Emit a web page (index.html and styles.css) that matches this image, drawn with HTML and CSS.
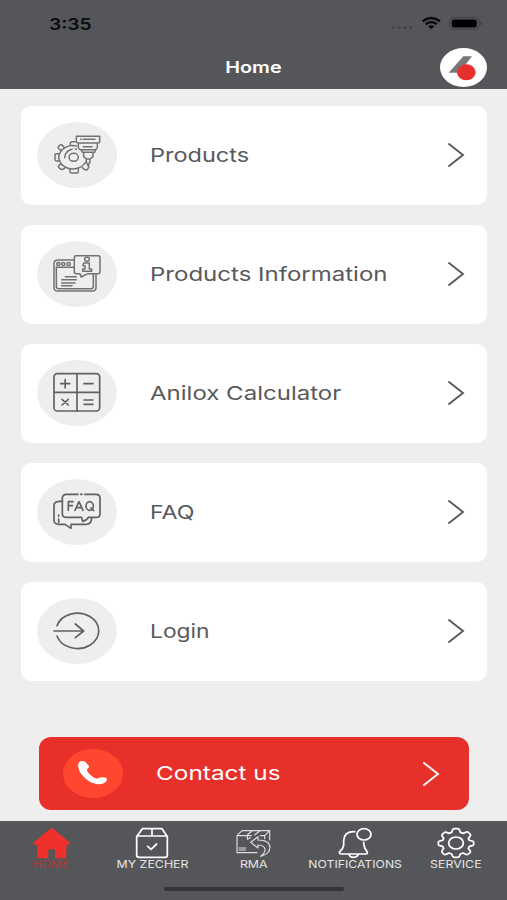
FILE: index.html
```html
<!DOCTYPE html>
<html lang="en">
<head>
<meta charset="utf-8">
<title>Home</title>
<link rel="stylesheet" href="styles.css">
</head>
<body>
<div class="app">
  <header class="header">
    <div class="status">
      <span class="time"><span class="wide">3:35</span></span>
      <svg class="status-icons" width="96" height="16" viewBox="0 0 96 16">
        <g fill="#424347"><circle cx="3" cy="12.500" r="1.500"/><circle cx="9" cy="12.500" r="1.500"/><circle cx="15" cy="12.500" r="1.500"/><circle cx="21" cy="12.500" r="1.500"/></g>
        <g fill="none" stroke="#08090b" stroke-width="2.300"><path d="M32.500 6.300Q41-.3 50 6.300M35.700 9.200Q41.300 5.100 46.800 9.200"/></g>
        <path d="M38 11.300Q41.300 9 44.600 11.300L41.300 14Z" fill="#08090b"/>
        <rect x="59.500" y="2.500" width="29.500" height="11.800" rx="3.800" fill="#55565a" stroke="#3d3e42"/>
        <rect x="61.700" y="4.400" width="25" height="8" rx="2" fill="#000"/>
        <path d="M90.500 6.300Q94 8.500 90.500 10.500Z" fill="#3d3e42"/>
      </svg>
    </div>
    <div class="titlebar">
      <h1 class="title"><span class="wide">Home</span></h1>
      <svg class="logo" width="47" height="39" viewBox="0 0 141 117">
        <ellipse cx="70.500" cy="58.500" rx="70.500" ry="58.500" fill="#fff"/>
        <path d="M26 74 70 25H96L58 74Z" fill="#77787b"/>
        <ellipse cx="79" cy="73" rx="28" ry="24" fill="#e5302e"/>
      </svg>
    </div>
  </header>

  <main class="content">
    <nav class="menu">
      <a class="card">
        <svg class="icon" viewBox="51 67 240 198">
          <g class="line">
            <path d="M169 139A42 35 0 1 0 197 187M151 137V130Q151 126 157 126H165M132 143 126 136Q121 133 116 140 112 145 120 150L125 153M119 162H108Q105 162 105 166V179Q105 184 109 184H120M124 192 116 198Q113 201 119 206 126 212 132 207L137 202M150 207V217Q150 220 155 220H171Q175 220 175 216V207M187 204 193 209Q199 213 204 207 208 201 205 196"/>
            <ellipse cx="161" cy="173" rx="14" ry="12"/>
            <path d="M134 174Q135 154 156 149M166 148 169 149M169 110H239V126Q239 130 234 130H175Q169 130 169 125ZM175 131V143Q175 148 181 150H226Q232 148 232 143V131M184 150 187 158H224L227 150M191 160V171L199 178V187L204 197 210 187V178L219 171V160M199 178H210M190 119H225M182 119H184M190 141H216"/>
          </g>
        </svg>
        <span class="label"><span class="wide products">Products</span></span>
        <svg class="chevron" viewBox="0 0 18 26"><path d="M2 2 16 13 2 24"/></svg>
      </a>
      <a class="card">
        <svg class="icon" viewBox="51 65 240 198">
          <g class="line">
            <path d="M162 122H114Q102 122 102 132V205Q102 215 114 215H217Q228 215 228 205V164M109 143V202Q109 208 117 208H213Q220 208 220 202V164M109 144H162"/>
            <ellipse cx="115" cy="134" rx="5" ry="4.500"/><ellipse cx="130" cy="134" rx="5" ry="4.500"/><ellipse cx="146" cy="134" rx="5" ry="4.500"/>
            <path d="M136 172H169M125 181H169M125 191H165M125 199H156M168 109H234Q240 109 240 114V157Q240 163 234 163H204L183 173 180 163H169Q163 163 163 157V115Q163 109 168 109Z"/>
            <ellipse cx="201" cy="120" rx="7" ry="6"/>
            <path d="M191 131H208V149H215V156H188V149H195V139H189Z"/>
          </g>
        </svg>
        <span class="label"><span class="wide information">Products Information</span></span>
        <svg class="chevron" viewBox="0 0 18 26"><path d="M2 2 16 13 2 24"/></svg>
      </a>
      <a class="card">
        <svg class="icon" viewBox="51 62 240 198">
          <g class="line bold">
            <rect x="102" y="103" width="137" height="112" rx="10"/>
            <path d="M171 103V215M102 159H239M122 133H149M135.500 121V145M192 133H219M192 182H219M192 195H219M126 180 145 197M145 180 126 197"/>
          </g>
        </svg>
        <span class="label"><span class="wide calculator">Anilox Calculator</span></span>
        <svg class="chevron" viewBox="0 0 18 26"><path d="M2 2 16 13 2 24"/></svg>
      </a>
      <a class="card">
        <svg class="icon" viewBox="51 58 240 198">
          <g class="line bold">
            <path d="M174 104H140Q127 104 127 116V162Q127 173 140 173H185L188 185Q199 183 205 173H228Q240 173 240 162V116Q240 104 228 104H194M182 104H186M127 125H117Q102 126 102 138V182Q102 194 117 194H135L153 206V194H198Q213 194 215 177M116 166V170M116 178V188"/>
            <path d="M145 152V126H159M145 138H157M165 152 177 126 189 152M170 144H185M213 145 221 153"/>
            <ellipse cx="209" cy="139" rx="11" ry="13"/>
          </g>
        </svg>
        <span class="label"><span class="wide faq">FAQ</span></span>
        <svg class="chevron" viewBox="0 0 18 26"><path d="M2 2 16 13 2 24"/></svg>
      </a>
      <a class="card">
        <svg class="icon" viewBox="51 55 240 198">
          <g class="line bold"><path d="M111 138A64 53 0 1 1 111 169M102 154H191M166 133 191 154 166 174"/></g>
        </svg>
        <span class="label"><span class="wide login">Login</span></span>
        <svg class="chevron" viewBox="0 0 18 26"><path d="M2 2 16 13 2 24"/></svg>
      </a>
    </nav>
    <a class="contact">
      <svg class="phone" viewBox="129 56 180 148"><path d="M181 93Q189 90 196 95L207 107Q208 113 201 117 199 121 206 129 218 142 228 145 234 146 238 143 247 139 258 143 264 148 258 155 246 166 226 161 205 156 190 139 174 123 174 104 175 96 181 93Z" fill="#fff"/></svg>
      <span class="label"><span class="wide contact-text">Contact us</span></span>
      <svg class="chevron" viewBox="0 0 18 26"><path d="M2 2 16 13 2 24"/></svg>
    </a>
  </main>

  <footer class="footer">
    <nav class="tabs">
      <a class="tab active">
        <svg class="tab-icon" viewBox="99 36 108 96"><path d="M150 41Q155 37 160 41L208 82Q213 87 207 89H199V124Q199 130 193 130H165V108Q165 102 159 102H151Q145 102 145 108V130H118Q112 130 112 124V89H103Q97 87 102 82Z" fill="#ef302c"/></svg>
        <span class="tab-label"><span class="wide">HOME</span></span>
      </a>
      <a class="tab">
        <svg class="tab-icon" viewBox="404 36 108 96"><g class="line white"><path d="M429 41H488L504 65V120Q504 127 497 127H420Q412 127 412 120V65ZM412 63H504M458 41V63M445 94 455 103 472 87"/></g></svg>
        <span class="tab-label"><span class="wide">MY ZECHER</span></span>
      </a>
      <a class="tab">
        <svg class="tab-icon" viewBox="706 36 108 96"><g class="line white thin"><path d="M755 62H712V113H772M712 62 727 47H810V75M795 62V71M810 47 795 62H782M743 60 757 48M765 60 780 48M743 62V73L752 68M718 99H738M718 105H738"/><path d="M753 82 775 65V75Q810 75 811 97 810 118 783 124 798 113 796 102 793 91 775 90V99Z"/></g></svg>
        <span class="tab-label"><span class="wide">RMA</span></span>
      </a>
      <a class="tab">
        <svg class="tab-icon" viewBox="249 36 108 96"><g class="line white"><path d="M302 50Q270 49 269 77V91Q268 100 258 109 253 116 262 117H334Q343 116 339 109 330 100 329 82M285 118Q287 127 298 127 310 127 313 118"/><ellipse cx="330" cy="58" rx="21" ry="17"/></g></svg>
        <span class="tab-label"><span class="wide notifications">NOTIFICATIONS</span></span>
      </a>
      <a class="tab">
        <svg class="tab-icon" viewBox="554 36 108 96"><g class="line white"><ellipse cx="608" cy="84" rx="22" ry="18"/><path d="M598 44Q599 41 603 41H613Q617 41 618 44L621 52 630 55 639 51Q643 50 646 53L651 58Q653 61 650 64L645 70 648 76 657 78Q661 79 661 82V88Q661 91 657 92L648 94 645 100 650 107Q653 110 650 113L644 118Q640 120 637 118L629 114 621 117 618 124Q617 127 613 127H603Q599 127 598 124L595 117 587 114 578 118Q574 120 571 117L566 112Q564 109 567 106L571 100 568 94 559 92Q555 91 555 88V82Q555 79 559 78L568 76 571 70 567 64Q564 61 567 58L573 53Q576 50 580 52L587 55 595 52Z"/></g></svg>
        <span class="tab-label"><span class="wide">SERVICE</span></span>
      </a>
    </nav>
    <div class="home-indicator"></div>
  </footer>
</div>
</body>
</html>
```

FILE: styles.css
```css
* { box-sizing: border-box; }
body { margin: 0; background: #eee; font-family: Inter, "Liberation Sans", sans-serif; }
.app { width: 507px; height: 900px; display: flex; flex-direction: column; overflow: hidden; }
svg { display: block; flex: none; }
.wide { display: inline-block; white-space: nowrap; transform: scaleX(1.2); transform-origin: left; }
.products { transform: scaleX(1.237); }
.information, .calculator { transform: scaleX(1.264); }
.faq { transform: scaleX(1.22); }
.contact-text { transform: scaleX(1.282); }

.header { height: 89px; background: #555659; flex: none; }
.status { height: 48px; display: flex; justify-content: space-between; align-items: flex-start; padding: 15px 21px 0 49px; }
.time { font-size: 16px; line-height: 18px; font-weight: 600; color: #0b0c0e; }
.titlebar { display: grid; grid-template-columns: 1fr auto 1fr; height: 39px; padding-right: 20px; padding-left: 20px; }
.title { grid-column: 2; margin: 0; font-size: 16.500px; line-height: 38px; font-weight: 600; color: #fff; }
.title .wide { transform-origin: center; }
.logo { justify-self: end; }

.content { height: 732px; flex: none; padding: 17px 20px 0 21px; }
.menu { display: flex; flex-direction: column; gap: 20px; }
.card { height: 99px; display: flex; align-items: center; padding: 0 22px 1px 16px; background: #fff; border-radius: 10px; }
.icon { width: 80px; height: 66px; border-radius: 50%; background: #eee; }
.line { fill: none; stroke: #707274; stroke-width: 4.500; stroke-linecap: round; stroke-linejoin: round; }
.bold { stroke: #606164; stroke-width: 5; }
.white { stroke: #fff; stroke-width: 5.200; }
.thin { stroke: #ddd; stroke-width: 3.500; }
.label { flex: 1; margin-left: 33px; padding-top: 1px; font-size: 19px; line-height: 26px; color: #58595b; }
.chevron { width: 18px; height: 26px; fill: none; stroke: #58595b; stroke-width: 1.900; stroke-linecap: round; }

.contact { margin: 56px 18px 0; height: 73px; display: flex; align-items: center; padding: 0 29px 0 24px; border-radius: 12px; background: #e8302b; }
.phone { width: 60px; height: 49px; border-radius: 50%; background: #ff4730; }
.contact .label { color: #fff; }
.contact .chevron { stroke: #fff; }

.footer { height: 79px; background: #555659; flex: none; }
.tabs { height: 66px; padding-top: 6px; display: grid; grid-template-columns: repeat(5, 1fr); }
.tab { display: flex; flex-direction: column; align-items: center; }
.tab-icon { width: 36px; height: 32px; overflow: visible; }
.tab-label { font-size: 10.500px; line-height: 11px; color: #e6e6e7; }
.tab-label .wide { transform: scaleX(1.18); transform-origin: center; }
.tab-label .notifications { transform: scaleX(1.165); }
.active .tab-label { color: #a83c3b; }
.home-indicator { width: 180px; height: 4px; margin: 0 auto; border-radius: 2px; background: #333436; }
```
